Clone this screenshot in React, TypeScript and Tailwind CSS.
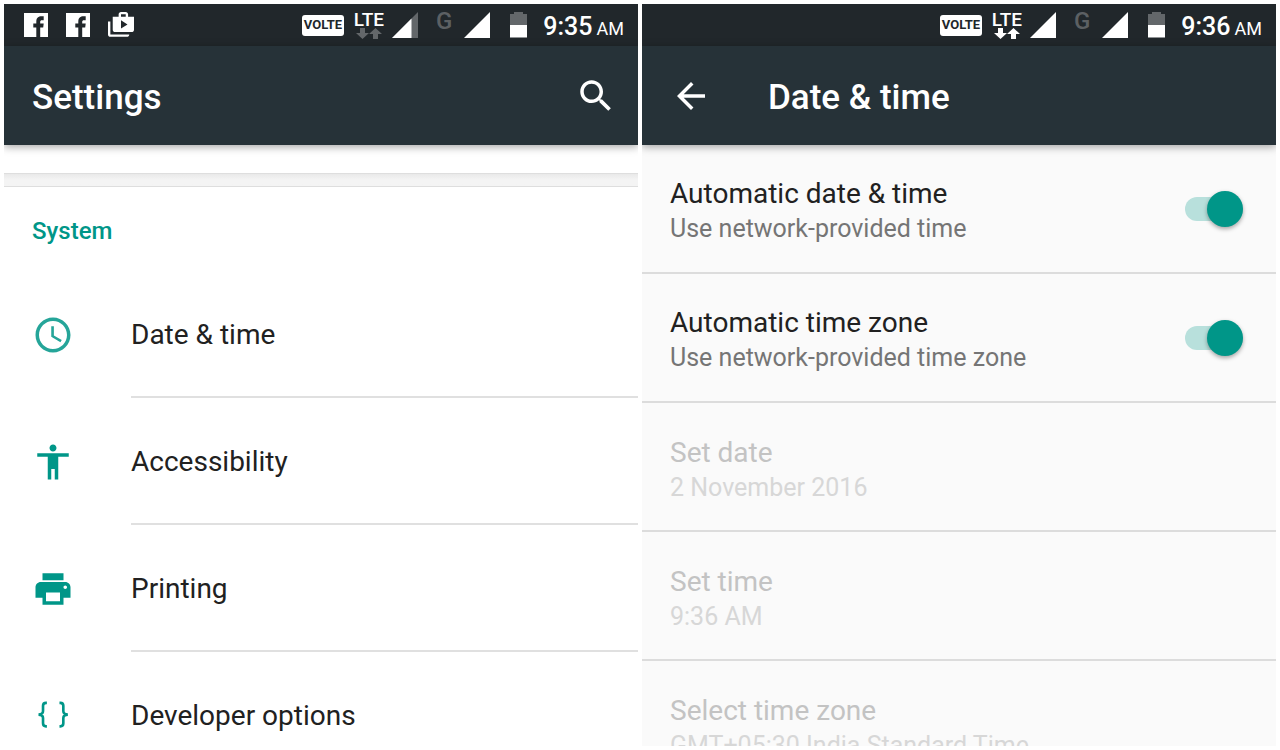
import React from 'react';

const StatusBar: React.FC<{ time: string; weakSignal?: boolean; children?: React.ReactNode }> = ({ time, weakSignal, children }) => (
  <div className="flex h-[42px] shrink-0 items-center justify-between bg-[#21272b] pl-5 pr-3.5 text-white">
    <div className="flex items-center gap-[18px]">{children}</div>
    <div className="flex items-center">
      <span className="mr-2.5 flex h-[21px] w-[42px] items-center justify-center rounded-[3px] bg-white text-[13px] font-bold text-[#21272b]">VOLTE</span>
      <div className="mr-2 flex w-[30px] flex-col items-center">
        <span className="text-[19px] font-medium leading-4">LTE</span>
        <svg viewBox="0 0 26 11" className={`h-[11px] w-[26px] ${weakSignal ? 'fill-[#63676a]' : 'fill-white'}`}>
          <path d="M4 0h5v5h4L6.500 11 0 5h4zM17 11h5V6h4L19.500 0 13 6h4z" />
        </svg>
      </div>
      <Signal weak={weakSignal} />
      <span className="ml-[18px] mr-3 pb-2 text-[24px] font-medium leading-6 text-[#5c6063]">G</span>
      <Signal />
      <svg viewBox="0 0 17 26" className="ml-5 mr-4 h-[26px] w-[17px]">
        <path d="M0 2h4V0h9v2h4v11H0z" fill="#63676a" />
        <path d="M0 13h17v12.500H0z" fill="#fff" />
      </svg>
      <span className="flex items-baseline gap-1 pt-1.5 text-[25px] font-medium leading-7">
        {time} <small className="text-[18px] font-normal">AM</small>
      </span>
    </div>
  </div>
);

const Signal: React.FC<{ weak?: boolean }> = ({ weak }) => (
  <svg viewBox="0 0 26 26" className="h-[26px] w-[26px]">
    <path d="M26 0v26H0z" fill={weak ? '#63676a' : '#fff'} />
    {weak && <path d="M19.500 6.500V26H0z" fill="#fff" />}
  </svg>
);

const FacebookIcon = () => (
  <svg viewBox="0 0 24 24" className="size-6">
    <path d="M0 0h24v24H0z" fill="#fff" />
    <path d="M12.300 24V14.500H9.300v-4h3V8.500c0-3.600 2.200-5.200 5.200-5.200h2.200v3.900h-1.800c-1.200 0-1.700.5-1.700 1.600v1.700h3.500l-.5 4h-3V24z" fill="#21272b" />
  </svg>
);

const Icon: React.FC<{ d: string; className?: string }> = ({ d, className = '' }) => (
  <svg viewBox="0 0 24 24" className={`fill-current ${className}`}>
    <path d={d} />
  </svg>
);

const ShopIcon = () => (
  <svg viewBox="1 1 22 22" className="size-[26px] fill-current">
    <path d="M3 9H1v11c0 1.110.890 2 2 2h14c1.110 0 2-.890 2-2H3V9zM18 5V3c0-1.110-.890-2-2-2h-4c-1.110 0-2 .890-2 2v2H5v11c0 1.110.890 2 2 2h14c1.110 0 2-.890 2-2V5h-5zm-6-2h4v2h-4V3zm0 12V8l5.500 3.500z" />
  </svg>
);

const icons = {
  search: 'M15.5 14h-.79l-.28-.27C15.41 12.59 16 11.11 16 9.5 16 5.91 13.09 3 9.5 3S3 5.91 3 9.5 5.91 16 9.5 16c1.61 0 3.09-.59 4.23-1.57l.27.28v.79l5 4.99L20.49 19l-4.99-5zm-6 0C7.01 14 5 11.99 5 9.5S7.01 5 9.5 5 14 7.01 14 9.5 11.99 14 9.5 14z',
  back: 'M20 11H7.83l5.59-5.59L12 4l-8 8 8 8 1.41-1.41L7.83 13H20v-2z',
  clock: 'M11.99 2C6.47 2 2 6.48 2 12s4.47 10 9.99 10C17.52 22 22 17.52 22 12S17.52 2 11.99 2zM12 20c-4.420 0-8-3.580-8-8s3.580-8 8-8 8 3.580 8 8-3.580 8-8 8zM12.500 7H11v6l5.250 3.150.750-1.230-4.500-2.670z',
  person: 'M12 2c1.1 0 2 .9 2 2s-.9 2-2 2-2-.9-2-2 .9-2 2-2zm9 7h-6v13h-2v-6h-2v6H9V9H3V7h18v2z',
  print: 'M19 8H5c-1.66 0-3 1.34-3 3v6h4v4h12v-4h4v-6c0-1.66-1.34-3-3-3zm-3 11H8v-5h8v5zm3-7c-.55 0-1-.45-1-1s.45-1 1-1 1 .45 1 1-.45 1-1 1zm-1-9H6v4h12V3z',
};

const BracesIcon = () => (
  <svg viewBox="0 0 24 24" className="size-[42px]" fill="none" stroke="currentColor" strokeWidth="1.500">
    <path d="M8.500 4.500H8Q6.300 4.500 6.300 6.200v3Q6.300 11.200 3.700 11.200 6.300 11.200 6.300 13.200v3Q6.300 17.900 8 17.900h.5M15.700 4.500h.5Q17.900 4.500 17.900 6.200v3Q17.900 11.200 20.500 11.200 17.900 11.200 17.900 13.200v3Q17.900 17.900 16.200 17.900h-.5" />
  </svg>
);

const MenuRow: React.FC<{ label: string; icon: React.ReactNode }> = ({ label, icon }) => (
  <button className="flex h-[127px] w-full shrink-0 items-stretch pl-7 text-left">
    <span className="flex w-[99px] items-center text-[#009688]">{icon}</span>
    <span className="flex flex-1 items-center border-b-2 border-[#e0e0e0] pt-0.5 text-[28px] text-[#212121]">{label}</span>
  </button>
);

const SwitchRow: React.FC<{ title: string; summary: string }> = ({ title, summary }) => (
  <label className="flex h-[129px] shrink-0 items-center justify-between border-b-2 border-[#dcdcdc] pl-7 pr-[33px]">
    <span className="pt-1">
      <span className="block text-[28px] leading-9 text-[#212121]">{title}</span>
      <span className="block text-[25px] leading-[34px] text-[#757575]">{summary}</span>
    </span>
    <input
      type="checkbox"
      defaultChecked
      className="relative h-6 w-[58px] appearance-none rounded-full bg-[#b8e0dc] before:absolute before:-top-1.5 before:left-0 before:size-9 before:rounded-full before:bg-[#009688] before:shadow-[0_2px_4px_rgba(0,0,0,0.35)] checked:before:left-[22px]"
    />
  </label>
);

const DisabledRow: React.FC<{ title: string; summary: string }> = ({ title, summary }) => (
  <button disabled className="flex h-[129px] w-full shrink-0 flex-col justify-center border-b-2 border-[#dcdcdc] pl-7 pt-1.5 text-left">
    <span className="block text-[28px] leading-9 text-[#c3c3c3]">{title}</span>
    <span className="block text-[25px] leading-[34px] text-[#d7d7d7]">{summary}</span>
  </button>
);

const App: React.FC = () => (
  <div className="grid h-screen grid-cols-2 gap-1 bg-white p-1 font-['Roboto',sans-serif]">
    <section className="flex min-h-0 flex-col overflow-hidden bg-white">
      <StatusBar time="9:35" weakSignal>
        <FacebookIcon />
        <FacebookIcon />
        <ShopIcon />
      </StatusBar>
      <header className="relative z-10 flex h-[99px] shrink-0 items-center justify-between bg-[#263238] pl-7 pr-[21px] text-white shadow-[0_2px_8px_rgba(0,0,0,0.35)]">
        <h1 className="pt-1.5 text-[35px] font-medium">Settings</h1>
        <button aria-label="Search">
          <Icon d={icons.search} className="size-[42px]" />
        </button>
      </header>
      <main className="min-h-0 flex-1 overflow-hidden">
        <div className="mt-7 h-3.5 border-y border-[#dedede] bg-linear-to-b from-[#e9e9e9] to-[#f4f4f4] to-50%" />
        <h2 className="h-[84px] pl-7 pt-7 text-[24px] font-medium leading-8 text-[#009688]">System</h2>
        <MenuRow label="Date & time" icon={<Icon d={icons.clock} className="size-[42px] opacity-85" />} />
        <MenuRow label="Accessibility" icon={<Icon d={icons.person} className="size-[42px]" />} />
        <MenuRow label="Printing" icon={<Icon d={icons.print} className="size-[42px]" />} />
        <MenuRow label="Developer options" icon={<BracesIcon />} />
      </main>
    </section>

    <section className="flex min-h-0 flex-col overflow-hidden bg-[#fafafa]">
      <StatusBar time="9:36" />
      <header className="relative z-10 flex h-[99px] shrink-0 items-center gap-14 bg-[#263238] pl-7 text-white shadow-[0_2px_8px_rgba(0,0,0,0.35)]">
        <button aria-label="Back">
          <Icon d={icons.back} className="size-[42px]" />
        </button>
        <h1 className="pt-1.5 text-[35px] font-medium">Date &amp; time</h1>
      </header>
      <main className="min-h-0 flex-1 overflow-hidden">
        <SwitchRow title="Automatic date & time" summary="Use network-provided time" />
        <SwitchRow title="Automatic time zone" summary="Use network-provided time zone" />
        <DisabledRow title="Set date" summary="2 November 2016" />
        <DisabledRow title="Set time" summary="9:36 AM" />
        <DisabledRow title="Select time zone" summary="GMT+05:30 India Standard Time" />
      </main>
    </section>
  </div>
);

export default App;
